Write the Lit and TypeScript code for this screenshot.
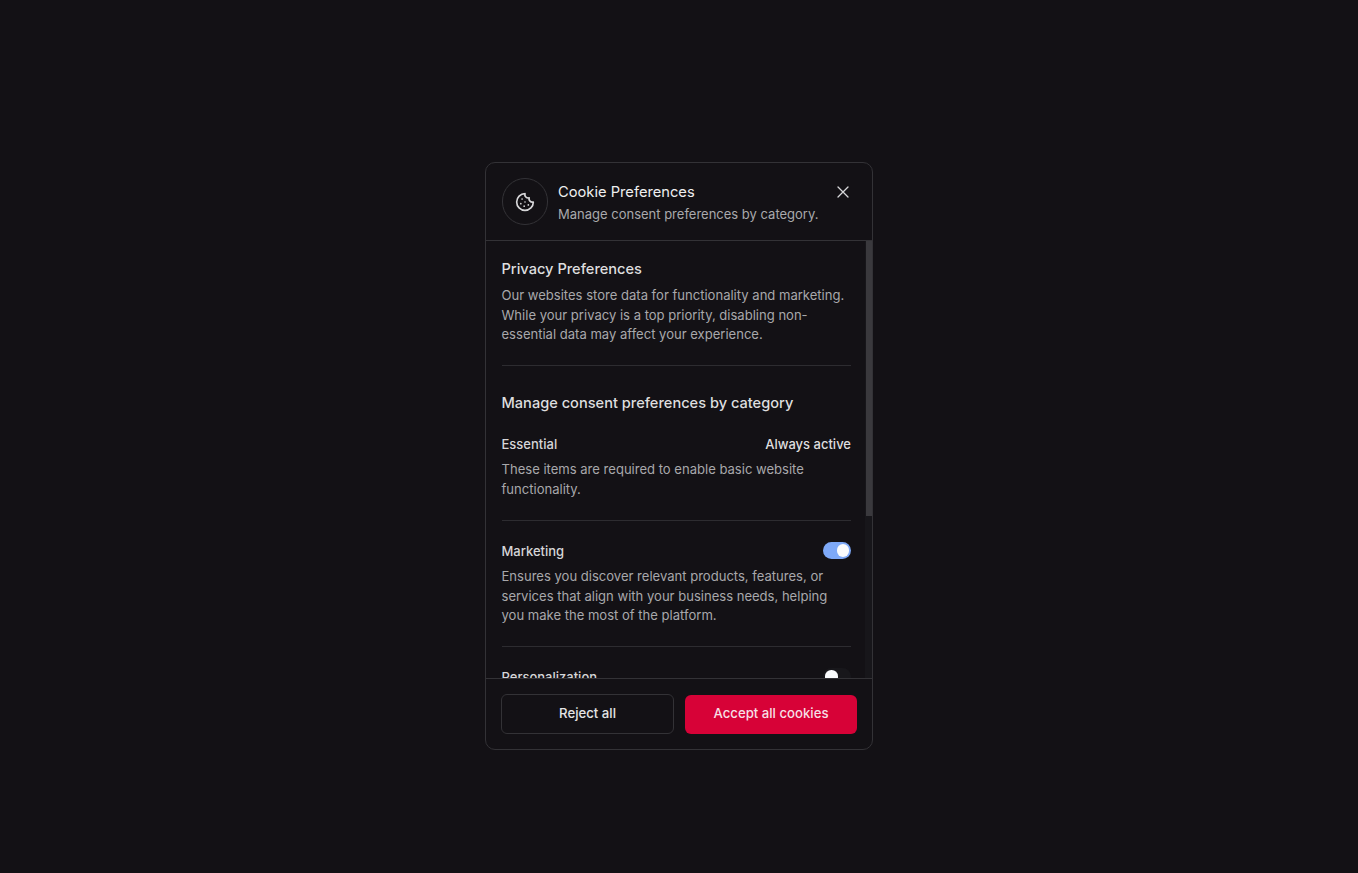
import { LitElement, html, css } from "lit";
import { customElement } from "lit/decorators.js";

@customElement("app-root")
export class AppRoot extends LitElement {
  static styles = css`
    :host {
      display: flex;
      justify-content: center;
      align-items: flex-start;
      box-sizing: border-box;
      height: 873px;
      padding-top: 162px;
      background: #131115;
      font-family: Inter, "Liberation Sans", sans-serif;
      color: #d4d4d6;
      overflow: hidden;
    }
    .card {
      width: 388px;
      height: 588px;
      box-sizing: border-box;
      border: 1px solid #333236;
      border-radius: 10px;
      display: flex;
      flex-direction: column;
      overflow: hidden;
      background: #131115;
    }
    .head {
      flex: none;
      height: 78px;
      box-sizing: border-box;
      display: flex;
      align-items: center;
      gap: 10px;
      padding: 0 15.5px;
      border-bottom: 1px solid #333236;
      position: relative;
    }
    .logo {
      flex: none;
      width: 46.5px;
      height: 46.5px;
      box-sizing: border-box;
      border-radius: 50%;
      border: 1.5px solid #343337;
      display: flex;
      align-items: center;
      justify-content: center;
      color: #d6d6d8;
    }
    .titles {
      display: flex;
      flex-direction: column;
      gap: 2px;
      margin-top: 3px;
    }
    .title {
      font-size: 14.7px;
      line-height: 20px;
      color: #eeeeef;
    }
    .sub {
      font-size: 13px;
      line-height: 20px;
      color: #a9a9ac;
    }
    .close {
      position: absolute;
      right: 22px;
      top: 22px;
      width: 14px;
      height: 14px;
      color: #d8d8da;
      display: block;
    }
    .body {
      flex: 1;
      min-height: 0;
      position: relative;
      overflow: hidden;
    }
    .scroll {
      padding: 18px 21px 0 15.5px;
      display: flex;
      flex-direction: column;
    }
    .track {
      position: absolute;
      top: 0;
      right: 0;
      bottom: 0;
      width: 7px;
      background: #17161a;
    }
    .thumb {
      width: 6px;
      height: 275px;
      margin-left: 1px;
      background: #3a393d;
    }
    h2 {
      margin: 0;
      font-size: 14.6px;
      line-height: 20px;
      font-weight: 500;
      color: #dededf;
    }
    p {
      margin: 6px 0 0;
      font-size: 13.05px;
      line-height: 19.5px;
      color: #a8a8ab;
    }
    hr {
      margin: 0;
      border: 0;
      height: 1px;
      background: #2d2c30;
    }
    .intro {
      padding-bottom: 20px;
    }
    .intro p {
      margin-top: 7px;
    }
    .cat-title {
      margin-top: 27px;
      margin-bottom: 21.5px;
    }
    .row {
      padding-bottom: 21px;
    }
    .row.next {
      padding-top: 20px;
      padding-bottom: 20.5px;
    }
    .line {
      display: flex;
      justify-content: space-between;
      align-items: center;
      height: 20px;
    }
    .name {
      font-size: 13px;
      font-weight: 500;
      color: #d6d6d8;
    }
    .always {
      font-size: 13px;
      font-weight: 500;
      color: #dededf;
    }
    .toggle {
      width: 28px;
      height: 17px;
      margin-top: -1px;
      border-radius: 8.5px;
      background: #7ea9f8;
      position: relative;
      flex: none;
    }
    .toggle::after {
      content: "";
      position: absolute;
      top: 2.25px;
      right: 2px;
      width: 12.5px;
      height: 12.5px;
      border-radius: 50%;
      background: #fafbfd;
    }
    .toggle.off {
      background: #18171b;
    }
    .toggle.off::after {
      right: auto;
      left: 2px;
    }
    .foot {
      flex: none;
      height: 71px;
      box-sizing: border-box;
      border-top: 1px solid #333236;
      padding: 15px;
      display: flex;
      gap: 11px;
    }
    button {
      height: 40px;
      margin: 0;
      padding: 0 0 2px;
      border-radius: 6px;
      font: inherit;
      font-size: 13.2px;
      font-weight: 500;
      cursor: pointer;
    }
    .reject {
      width: 173px;
      background: #131115;
      border: 1px solid #333236;
      color: #e4e4e5;
    }
    .accept {
      width: 172px;
      height: 39px;
      margin-top: 1px;
      padding-bottom: 3px;
      background: #d70237;
      border: 0;
      color: #f6dfe4;
    }
  `;

  render() {
    return html`
      <div class="card">
        <div class="head">
          <div class="logo">
            <svg width="20" height="20" viewBox="0 0 24 24" fill="none" stroke="currentColor" stroke-width="2" stroke-linecap="round" stroke-linejoin="round">
              <path d="M12 2a10 10 0 1 0 10 10 4 4 0 0 1-5-5 4 4 0 0 1-5-5" />
              <path d="M8.5 8.5v.01" />
              <path d="M16 15.5v.01" />
              <path d="M12 12v.01" />
              <path d="M11 17v.01" />
              <path d="M7 14v.01" />
            </svg>
          </div>
          <div class="titles">
            <div class="title">Cookie Preferences</div>
            <div class="sub">Manage consent preferences by category.</div>
          </div>
          <svg class="close" viewBox="0 0 14 14" fill="none" stroke="currentColor" stroke-width="1.3" stroke-linecap="round">
            <path d="M2 2l10 10M12 2L2 12" />
          </svg>
        </div>
        <div class="body">
          <div class="scroll">
            <div class="intro">
              <h2>Privacy Preferences</h2>
              <p>Our websites store data for functionality and marketing. While your privacy is a top priority, disabling non-essential data may affect your experience.</p>
            </div>
            <hr />
            <h2 class="cat-title">Manage consent preferences by category</h2>
            <div class="row">
              <div class="line"><span class="name">Essential</span><span class="always">Always active</span></div>
              <p>These items are required to enable basic website functionality.</p>
            </div>
            <hr />
            <div class="row next">
              <div class="line"><span class="name">Marketing</span><span class="toggle"></span></div>
              <p>Ensures you discover relevant products, features, or services that align with your business needs, helping you make the most of the platform.</p>
            </div>
            <hr />
            <div class="row next">
              <div class="line"><span class="name">Personalization</span><span class="toggle off"></span></div>
            </div>
          </div>
          <div class="track"><div class="thumb"></div></div>
        </div>
        <div class="foot">
          <button class="reject">Reject all</button>
          <button class="accept">Accept all cookies</button>
        </div>
      </div>
    `;
  }
}
